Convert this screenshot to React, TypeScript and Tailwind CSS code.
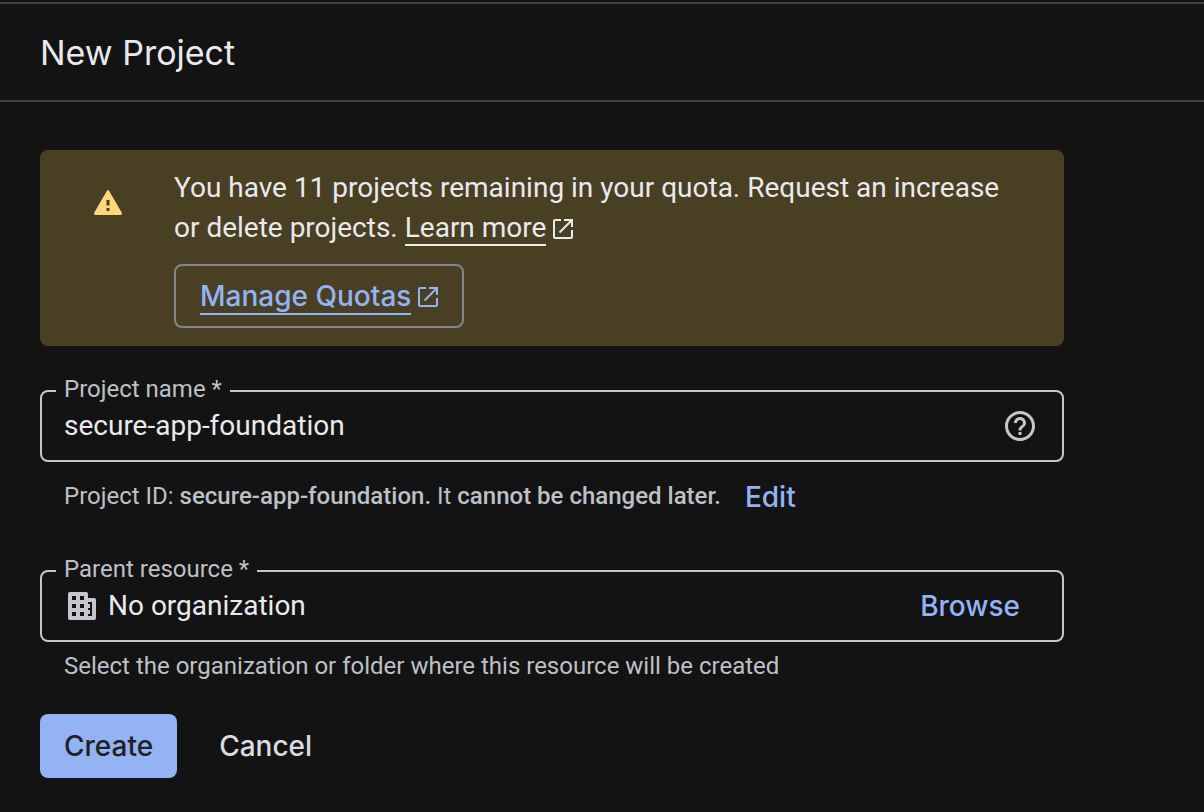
import type { ReactNode } from 'react';
import { MdHelpOutline } from 'react-icons/md';

const SANS = "font-[Roboto,'Noto_Sans',sans-serif]";
const DISPLAY = "font-['Google_Sans',Inter,sans-serif]";

function OpenInNewIcon() {
  return (
    <svg viewBox="0 0 20 20" className="size-5 shrink-0" fill="none" stroke="currentColor" strokeWidth="2" aria-hidden="true">
      <path d="M8 1H2Q1 1 1 2V18Q1 19 2 19H18Q19 19 19 18V11" />
      <path d="M11 1H19V8M19 1L6.5 13.5" />
    </svg>
  );
}

function WarningIcon() {
  return (
    <svg viewBox="0 0 28 25" className="h-[25px] w-7" fill="currentColor" fillRule="evenodd" aria-hidden="true">
      <path d="M13.1 .6Q14-.6 14.9 .6L27.7 22.6Q28.6 25 26.4 25H1.6Q-.6 25 .3 22.6ZM12.5 10V15.5H15.5V10ZM12.5 18V21H15.5V18Z" />
    </svg>
  );
}

function OrganizationIcon() {
  return (
    <svg viewBox="0 0 28 28" className="ml-1 size-7 shrink-0 text-[#c4c7cc]" fill="currentColor" fillRule="evenodd" aria-hidden="true">
      <path d="M2 0H18Q20 0 20 2V6H26Q28 6 28 8V26Q28 28 26 28H2Q0 28 0 26V2Q0 0 2 0ZM4 4V8H8V4ZM12 4V8H16V4ZM4 12V16H8V12ZM12 12V16H16V12ZM4 20V24H8V20ZM12 20V24H16V20ZM20 10V12H22V16H20V18H22V22H20V24H24V10Z" />
    </svg>
  );
}

type OutlinedFieldProps = {
  id: string;
  label: string;
  value: string;
  readOnly?: boolean;
  prefix?: ReactNode;
  suffix?: ReactNode;
};

function OutlinedField({ id, label, value, readOnly, prefix, suffix }: OutlinedFieldProps) {
  return (
    <fieldset className="min-w-0 rounded-lg border-2 border-[#c4c7cc] px-3.5 pb-3.5">
      <legend className="h-[30px] px-2 text-2xl leading-[26px] text-[#bdc1c6]">
        <label htmlFor={id}>{label} *</label>
      </legend>
      <div className="flex h-10 items-center gap-3 px-2">
        {prefix}
        <input
          id={id}
          type="text"
          defaultValue={value}
          readOnly={readOnly}
          className="min-w-0 flex-1 bg-transparent text-[28px] leading-10 text-[#e8eaed] outline-none"
        />
        {suffix}
      </div>
    </fieldset>
  );
}

export default function App() {
  return (
    <div className={`min-h-screen bg-[#131314] pt-0.5 text-[#e8eaed] ${SANS}`}>
      <header className="flex h-[100px] items-center border-y-2 border-[#3c4043] px-10">
        <h1 className={`text-[34px] text-[#e8eaed] ${DISPLAY}`}>New Project</h1>
      </header>

      <main className="px-10 pt-12 pb-8">
        <form className="max-w-[1024px]" onSubmit={(event) => event.preventDefault()}>
          <div className="flex rounded-lg bg-[#493f23] py-[18px] pr-10">
            <div className="w-[134px] shrink-0 pt-[22px] pl-[54px] text-[#fdd87a]">
              <WarningIcon />
            </div>
            <div className="min-w-0">
              <p className="text-[28px] leading-10">
                You have 11 projects remaining in your quota. Request an increase or delete projects.{' '}
                <a href="#learn-more" className="inline-flex items-center gap-[7px] leading-8">
                  <span className="border-b-2 border-current">Learn more</span>
                  <OpenInNewIcon />
                </a>
              </p>
              <a
                href="#quotas"
                className={`mt-4 inline-flex h-16 items-center gap-[7px] rounded-lg border-2 border-[#80868b] px-6 pt-0.5 text-[28px] leading-[34px] font-medium text-[#94b3f5] ${DISPLAY}`}
              >
                <span className="border-b-2 border-current">Manage Quotas</span>
                <OpenInNewIcon />
              </a>
            </div>
          </div>

          <div className="mt-[30px]">
            <OutlinedField
              id="project-name"
              label="Project name"
              value="secure-app-foundation"
              suffix={
                <button type="button" aria-label="Help" className="mr-0.5 text-[#c4c7cc]">
                  <MdHelpOutline className="size-9" />
                </button>
              }
            />
          </div>
          <div className="mt-3.5 flex h-10 items-center gap-6 px-6">
            <p className="text-2xl text-[#bdc1c6]">
              Project ID: <strong className="font-medium">secure-app-foundation.</strong> It{' '}
              <strong className="font-medium">cannot be changed later.</strong>
            </p>
            <button type="button" className={`pt-0.5 text-[28px] font-medium text-[#94b3f5] ${DISPLAY}`}>
              Edit
            </button>
          </div>

          <div className="mt-10">
            <OutlinedField
              id="parent-resource"
              label="Parent resource"
              value="No organization"
              readOnly
              prefix={<OrganizationIcon />}
              suffix={
                <button type="button" className={`mr-5 text-[28px] font-medium text-[#94b3f5] ${DISPLAY}`}>
                  Browse
                </button>
              }
            />
          </div>
          <p className="mt-2 px-6 text-2xl leading-8 text-[#bdc1c6]">
            Select the organization or folder where this resource will be created
          </p>

          <div className="mt-8 flex gap-[18px]">
            <button type="submit" className={`h-16 rounded-lg bg-[#94b3f5] px-6 text-[28px] font-medium text-[#202124] ${DISPLAY}`}>
              Create
            </button>
            <button type="button" className={`h-16 rounded-lg px-6 text-[28px] font-medium text-[#dadce0] ${DISPLAY}`}>
              Cancel
            </button>
          </div>
        </form>
      </main>
    </div>
  );
}
